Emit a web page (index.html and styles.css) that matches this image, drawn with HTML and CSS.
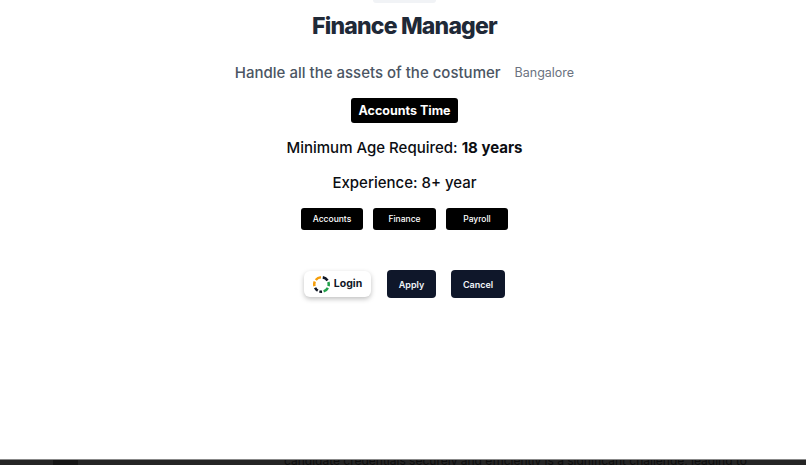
FILE: index.html
```html
<!DOCTYPE html>
<html lang="en">
<head>
    <meta charset="UTF-8">
    <meta name="viewport" content="width=device-width, initial-scale=1.0">
    <title>Finance Manager</title>
    <link rel="stylesheet" href="styles.css">
</head>
<body>
    <div class="job">
        <div class="top-pill"></div>
        <h1 class="job-title">Finance Manager</h1>

        <div class="job-line">
            <p class="job-desc">Handle all the assets of the costumer</p>
            <span class="job-place">Bangalore</span>
        </div>

        <div class="job-type">Accounts Time</div>

        <p class="job-info age">Minimum Age Required: <strong>18 years</strong></p>
        <p class="job-info exp">Experience: 8+ year</p>

        <div class="tags">
            <span class="tag">Accounts</span>
            <span class="tag">Finance</span>
            <span class="tag">Payroll</span>
        </div>

        <div class="actions">
            <button class="login-btn">
                <svg class="login-icon" width="17" height="17" viewBox="0 0 16 16" fill="none" stroke-width="2.4">
                    <path d="M7.5 1.2A6.8 6.8 0 0 0 2.6 3.7" stroke="#f59e0b"/>
                    <path d="M1.7 5.2A6.8 6.8 0 0 0 1.4 9.5" stroke="#f59e0b"/>
                    <path d="M2 11A6.8 6.8 0 0 0 4.5 13.8" stroke="#111827"/>
                    <path d="M6 14.5A6.8 6.8 0 0 0 8.5 14.8" stroke="#111827"/>
                    <path d="M10 14.5A6.8 6.8 0 0 0 14 11.2" stroke="#22a04a"/>
                    <path d="M14.6 9.5A6.8 6.8 0 0 0 14.4 5.6" stroke="#22a04a"/>
                    <path d="M13.7 4.2A6.8 6.8 0 0 0 9.2 1.3" stroke="#111827"/>
                </svg>
                <span class="login-text">Login</span>
            </button>
            <button class="dark-btn apply">Apply</button>
            <button class="dark-btn">Cancel</button>
        </div>
    </div>

    <div class="next-section">
        <div class="next-logo"></div>
        <p class="next-text">candidate credentials securely and efficiently is a significant challenge, leading to</p>
    </div>
</body>
</html>
```

FILE: styles.css
```css
* {
    margin: 0;
    padding: 0;
    box-sizing: border-box;
}

body {
    font-family: Inter, 'Liberation Sans', sans-serif;
    background: white;
    height: 465px;
    overflow: hidden;
}

.job {
    height: 459px;
    padding-left: 3px;
    display: flex;
    flex-direction: column;
    align-items: center;
}

.top-pill {
    width: 63px;
    height: 3px;
    background: #f1f3f6;
    border-radius: 0 0 4px 4px;
}

.job-title {
    margin-top: 7px;
    font-size: 23px;
    line-height: 32px;
    font-weight: 800;
    letter-spacing: -0.8px;
    color: #1f2937;
}

.job-line {
    margin-top: 18px;
    display: flex;
    align-items: center;
    gap: 14px;
    height: 24px;
}

.job-desc {
    font-size: 15px;
    font-weight: 500;
    color: #4b5563;
}

.job-place {
    font-size: 12.5px;
    color: #6b7280;
}

.job-type {
    margin-top: 14px;
    width: 107px;
    height: 25px;
    line-height: 25px;
    text-align: center;
    background: black;
    color: white;
    border-radius: 3px;
    font-size: 12.5px;
    font-weight: 700;
}

.job-info {
    font-size: 15px;
    font-weight: 500;
    line-height: 24px;
    color: #0b0d12;
}

.age {
    margin-top: 13px;
}

.age strong {
    font-weight: 700;
}

.exp {
    margin-top: 11px;
}

.tags {
    margin-top: 13px;
    display: flex;
    gap: 10px;
}

.tag {
    width: 62.5px;
    height: 22px;
    line-height: 22px;
    text-align: center;
    background: black;
    color: white;
    border-radius: 3px;
    font-size: 8.5px;
    font-weight: 500;
}

.actions {
    margin-top: 40px;
    display: flex;
    align-items: center;
}

.login-btn {
    width: 67px;
    height: 26px;
    display: flex;
    align-items: center;
    justify-content: center;
    gap: 4px;
    background: white;
    border: none;
    border-radius: 6px;
    box-shadow: 0 2px 5px rgba(0,0,0,0.25);
    font-family: inherit;
    font-size: 10.5px;
    font-weight: 700;
    color: #111827;
}

.login-text {
    margin-bottom: 2px;
}

.dark-btn {
    width: 54px;
    height: 28px;
    background: #0f172a;
    color: #f1f5f9;
    border: none;
    border-radius: 4px;
    font-family: inherit;
    font-size: 9px;
    font-weight: 600;
}

.apply {
    width: 49px;
    margin: 0 15px 0 16px;
}

.next-section {
    height: 6px;
    overflow: hidden;
    background: #252525;
    border-top: 1px solid #888;
    display: flex;
}

.next-logo {
    width: 25px;
    height: 6px;
    margin-left: 53px;
    background: #151515;
}

.next-text {
    margin-left: 206px;
    margin-top: -7px;
    font-size: 12px;
    line-height: 16px;
    white-space: nowrap;
    color: #0d0d0d;
}
```
